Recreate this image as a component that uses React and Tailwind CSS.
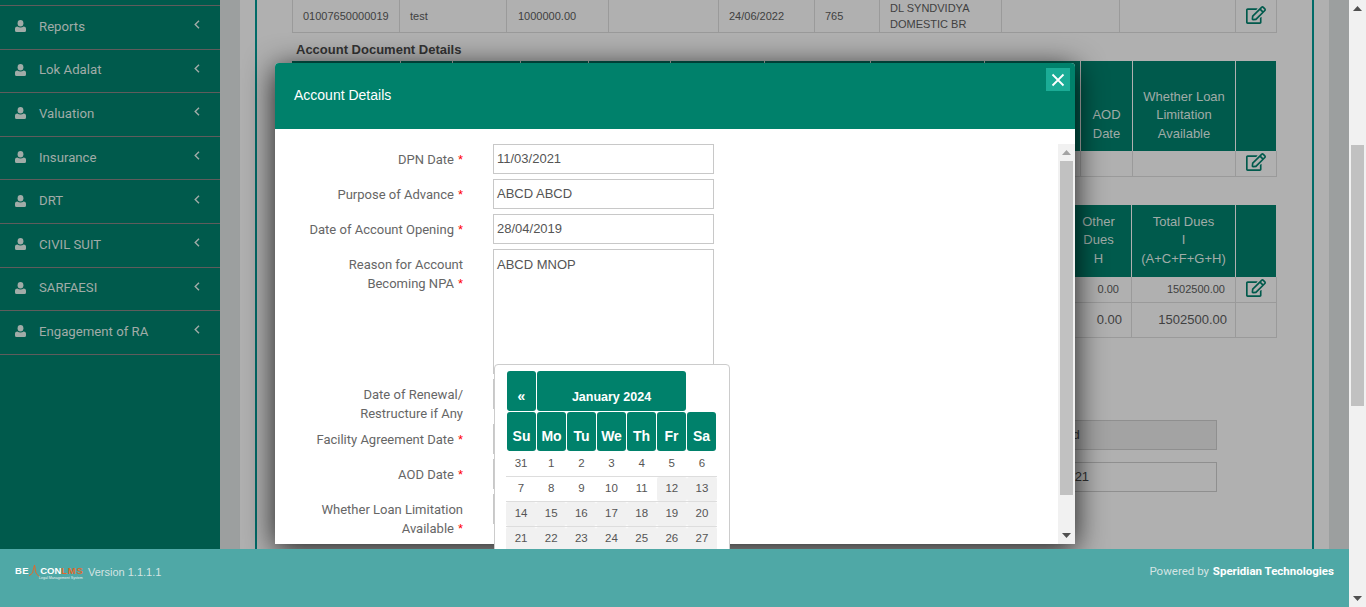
import React from "react";
import { FaRegEdit } from "react-icons/fa";

const menu = ["Reports", "Lok Adalat", "Valuation", "Insurance", "DRT", "CIVIL SUIT", "SARFAESI", "Engagement of RA"];
const cols2 = [109, 52, 68, 68, 82, 94, 106, 114, 96, 52, 103, 40];

function Edit() {
  return <FaRegEdit className="text-[#005a4c] text-[20px] -ml-[1px] -mt-[3px]" />;
}

function UserIcon() {
  return (
    <svg width="11" height="12" viewBox="0 0 11 12" className="shrink-0 -mt-[1px]">
      <ellipse cx="5.5" cy="3.2" rx="2.9" ry="3.2" fill="#a1aca8" />
      <path d="M0 10.5V8.6Q0 6.4 2.4 6.4Q3.8 7.4 5.5 7.4Q7.2 7.4 8.6 6.4Q11 6.4 11 8.6V10.5Q11 12 9.5 12H1.5Q0 12 0 10.5Z" fill="#a1aca8" />
    </svg>
  );
}

function Sidebar() {
  return (
    <div className="w-[220px] h-full shrink-0 bg-[#005a4c] font-['Roboto',sans-serif] text-[13.2px] text-[#a1aca8]">
      <div className="h-[6px] border-b border-[#5f5c5c]" />
      {menu.map((m) => (
        <div key={m} className="h-[43.6px] border-b border-[#5f5c5c] flex items-center pl-[15px] pr-[20px] pb-[1px]">
          <UserIcon />
          <span className="ml-[13px] flex-1">{m}</span>
          <svg width="6" height="9" viewBox="0 0 6 9" className="-mt-[4px]">
            <path d="M5 0.7L1.2 4.5L5 8.3" stroke="#a1aca8" strokeWidth="1.4" fill="none" />
          </svg>
        </div>
      ))}
    </div>
  );
}

function BgCell({ children, className = "" }) {
  return <div className={"border-l border-[#9a9a9a] flex items-center " + className}>{children}</div>;
}

function Background() {
  return (
    <div className="flex-1 min-w-0 h-full bg-[#9c9f9f] px-[20px] overflow-hidden">
      <div className="bg-[#b0b0b0] px-[15px] h-full">
        <div className="border-x-2 border-[#006b68] h-full px-[35px] font-['Liberation_Sans',sans-serif] text-[#404040]">
          <div className="grid grid-cols-[107px_107px_102px_110px_96px_65px_122px_118px_116px_42px] h-[33px] w-[985px] border-b border-[#9a9a9a] border-r text-[11px]">
            <BgCell className="pl-[10px]">01007650000019</BgCell>
            <BgCell className="pl-[10px]">test</BgCell>
            <BgCell className="pl-[11px]">1000000.00</BgCell>
            <BgCell />
            <BgCell className="pl-[10px]">24/06/2022</BgCell>
            <BgCell className="pl-[10px]">765</BgCell>
            <BgCell className="pl-[10px] leading-[16px]">DL SYNDVIDYA<br />DOMESTIC BR</BgCell>
            <BgCell />
            <BgCell />
            <BgCell className="justify-center"><Edit /></BgCell>
          </div>
          <div className="h-[28px] pt-[8px] pl-[4px] text-[13px] font-bold leading-[18px] text-[#333]">Account Document Details</div>
          <div className="flex h-[90px] bg-[#005a4c] text-[13px] leading-[18.5px] text-[#a1aca8] text-center w-[984px]">
            {cols2.map((w, i) => (
              <div key={i} style={{ width: w }} className={"flex items-end justify-center pb-[8px] shrink-0 " + (i < cols2.length - 1 ? "border-r border-[#b0b0b0]" : "")}>
                {i === 9 && <span>AOD<br />Date</span>}
                {i === 10 && <span>Whether Loan<br />Limitation<br />Available</span>}
              </div>
            ))}
          </div>
          <div className="grid grid-cols-[788px_52px_103px_42px] h-[26px] border-b border-r border-[#9a9a9a] w-[985px]">
            <BgCell /><BgCell /><BgCell />
            <BgCell className="justify-center"><Edit /></BgCell>
          </div>
          <div className="h-[28px]" />
          <div className="grid grid-cols-[774px_66px_104px_40px] h-[72px] bg-[#005a4c] text-[13px] leading-[18.5px] text-[#a1aca8] text-center w-[984px]">
            <div />
            <div className="flex items-end justify-center pb-[9px] border-r border-[#b0b0b0]"><span>Other<br />Dues<br />H</span></div>
            <div className="flex items-end justify-center pb-[9px] border-r border-[#b0b0b0]"><span>Total Dues<br />I<br />(A+C+F+G+H)</span></div>
            <div />
          </div>
          <div className="grid grid-cols-[773px_66px_104px_42px] h-[26px] border-b border-r border-[#9a9a9a] w-[985px] text-[11px]">
            <BgCell />
            <BgCell className="justify-end pr-[12px]">0.00</BgCell>
            <BgCell className="justify-end pr-[10px]">1502500.00</BgCell>
            <BgCell className="justify-center"><Edit /></BgCell>
          </div>
          <div className="grid grid-cols-[773px_66px_104px_42px] h-[35px] border-b border-r border-[#9a9a9a] w-[985px] text-[13px]">
            <BgCell />
            <BgCell className="justify-end pr-[9px]">0.00</BgCell>
            <BgCell className="justify-end pr-[8px]">1502500.00</BgCell>
            <BgCell />
          </div>
          <div className="mt-[82px] ml-[730px] w-[195px] h-[30px] border border-[#8f8f8f] bg-[#a3a3a3] text-[13px] flex items-center pl-[1px] text-[#333]">Approved</div>
          <div className="mt-[12px] ml-[730px] w-[195px] h-[30px] border border-[#8f8f8f] text-[13px] flex items-center pl-[2px] text-[#333]">11/03/2021</div>
        </div>
      </div>
    </div>
  );
}

function Field({ lines, req, value, tall, rowClass = "" }) {
  return (
    <div className={"flex " + rowClass}>
      <div className="w-[188px] shrink-0 pt-[6px] leading-[19px] text-[13px] text-[#666] font-['Roboto',sans-serif]">
        {lines.map((l, i) => (
          <div key={l} className="flex justify-end whitespace-nowrap">
            <span>{l}</span>
            {req && i === lines.length - 1 && <span className="text-[#f00] ml-[4px] font-['Liberation_Sans',sans-serif]">*</span>}
          </div>
        ))}
      </div>
      <div className={"ml-[30px] w-[221px] border border-[#c8c8c8] pl-[3px] text-[13px] text-[#555] font-['Liberation_Sans',sans-serif] shrink-0 " + (tall ? "h-[125px] pt-[6px] leading-[17px]" : "h-[30px] flex items-center")}>
        {value}
      </div>
    </div>
  );
}

function Tri({ down, color }) {
  return (
    <svg width="9" height="5" viewBox="0 0 9 5" className="block">
      <path d={down ? "M0 0H9L4.5 5Z" : "M0 5H9L4.5 0Z"} fill={color} />
    </svg>
  );
}

function Picker() {
  const heads = ["Su", "Mo", "Tu", "We", "Th", "Fr", "Sa"];
  const weeks = [
    [31, 1, 2, 3, 4, 5, 6],
    [7, 8, 9, 10, 11, 12, 13],
    [14, 15, 16, 17, 18, 19, 20],
    [21, 22, 23, 24, 25, 26, 27],
  ];
  const cell = "bg-[#00816b] rounded-[3px] text-white font-bold flex items-end justify-center pb-[4px]";
  return (
    <div className="absolute left-[219px] top-[301px] w-[236px] h-[220px] bg-white border border-[#ccc] rounded-[4px] pt-[6px] pl-[12px] font-['Liberation_Sans',sans-serif]">
      <div className="grid grid-cols-[repeat(7,30px)] w-[210px]">
        <div className={cell + " h-[40px] mr-[1px] mb-[1px] text-[14px]"}>«</div>
        <div className={cell + " col-span-5 h-[40px] mb-[1px] mr-[1px] text-[12.5px]"}>January 2024</div>
        <div />
        {heads.map((h) => (
          <div key={h} className={cell + " h-[39px] mr-[1px] text-[14px]"}>{h}</div>
        ))}
      </div>
      {weeks.map((w, i) => (
        <div key={i} className={"grid grid-cols-7 w-[211px] -ml-[1px] h-[25px] " + (i > 0 ? "border-t border-[#ddd]" : "")}>
          {w.map((d) => (
            <div key={d} className={"flex items-center justify-center text-[11.5px] text-[#555] " + (d >= 12 && d !== 31 ? "bg-[#f1f1f1] rounded-[2px]" : "")}>{d}</div>
          ))}
        </div>
      ))}
    </div>
  );
}

function Modal() {
  return (
    <div className="absolute left-[275px] top-[63px] w-[800px] h-[481px] z-10 bg-white rounded-t-[4px] shadow-[0_5px_30px_rgba(0,0,0,0.85)] flex flex-col">
      <div className="h-[66px] shrink-0 bg-[#00816b] rounded-t-[4px] flex justify-between pl-[19px] pr-[5px] font-['Liberation_Sans',sans-serif]">
        <div className="text-white text-[14px] mt-[24px] leading-[16px]">Account Details</div>
        <div className="mt-[5px] w-[24px] h-[23px] bg-[#1bac96] flex items-center justify-center">
          <svg width="14" height="14" viewBox="0 0 14 14"><path d="M1.5 1.5L12.5 12.5M12.5 1.5L1.5 12.5" stroke="#fff" strokeWidth="1.8" /></svg>
        </div>
      </div>
      <div className="flex-1 flex pt-[15px] min-h-0">
        <div className="flex-1 flex flex-col gap-[5px] overflow-hidden">
          <Field lines={["DPN Date"]} req value="11/03/2021" />
          <Field lines={["Purpose of Advance"]} req value="ABCD ABCD" />
          <Field lines={["Date of Account Opening"]} req value="28/04/2019" />
          <Field lines={["Reason for Account", "Becoming NPA"]} req value="ABCD MNOP" tall />
          <Field lines={["Date of Renewal/", "Restructure if Any"]} value="" rowClass="h-[40px]" />
          <Field lines={["Facility Agreement Date"]} req value="" />
          <Field lines={["AOD Date"]} req value="" />
          <Field lines={["Whether Loan Limitation", "Available"]} req value="" />
        </div>
        <div className="w-[17px] shrink-0 bg-[#f1f1f1] flex flex-col items-center">
          <div className="h-[17px] flex items-center justify-center shrink-0"><Tri color="#a3a3a3" /></div>
          <div className="h-[334px] w-[13px] bg-[#c1c1c1]" />
          <div className="flex-1" />
          <div className="h-[17px] flex items-center justify-center shrink-0"><Tri down color="#505050" /></div>
        </div>
      </div>
      <Picker />
    </div>
  );
}

function Footer() {
  return (
    <div className="h-[58px] shrink-0 bg-[#4fa8a6] relative z-20 flex items-center justify-between pl-[15px] pr-[15px] pb-[12px] font-['Liberation_Sans',sans-serif] text-[#d4e4e3]">
      <div className="flex items-center">
        <div className="w-[73px] mt-[3px]">
          <div className="text-[9.5px] font-bold leading-[10px] whitespace-nowrap flex items-center">
            <span className="text-white tracking-[0.5px]">BE</span>
            <svg width="11" height="14" viewBox="0 0 11 14" className="-my-[4px]"><path d="M0 12L3.5 9L5.5 1L7 9L10.5 13" stroke="#e06a2a" strokeWidth="1" fill="none" /></svg>
            <span className="text-white">CON</span>
            <span className="text-[#e06a2a] tracking-[0.7px]">LMS</span>
          </div>
          <div className="text-[3.6px] leading-[5px] pl-[24px] text-[#e8f0f0] whitespace-nowrap">Legal Management System</div>
        </div>
        <span className="text-[11px]">Version 1.1.1.1</span>
      </div>
      <div className="text-[11.5px] font-['Roboto',sans-serif]">
        Powered by <span className="font-bold text-white ml-[1px]">Speridian Technologies</span>
      </div>
    </div>
  );
}

export default function App() {
  return (
    <div className="h-[607px] w-[1366px] flex overflow-hidden relative">
      <div className="w-[1349px] shrink-0 h-full flex flex-col">
        <div className="h-[549px] flex">
          <Sidebar />
          <Background />
        </div>
        <Footer />
      </div>
      <div className="w-[17px] shrink-0 h-full bg-[#f1f1f1] flex flex-col items-center">
        <div className="h-[17px] flex items-center justify-center shrink-0"><Tri color="#505050" /></div>
        <div className="h-[128px] shrink-0" />
        <div className="h-[261px] w-[13px] bg-[#c1c1c1] shrink-0" />
        <div className="flex-1" />
        <div className="h-[17px] flex items-center justify-center shrink-0"><Tri down color="#505050" /></div>
      </div>
      <Modal />
    </div>
  );
}
